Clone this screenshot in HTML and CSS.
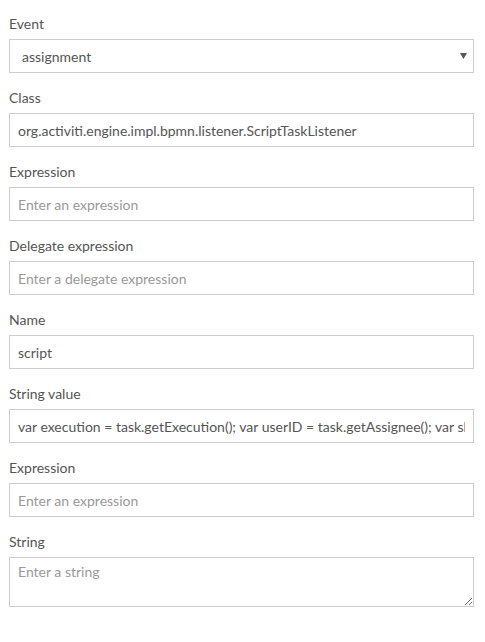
FILE: index.html
```html
<!DOCTYPE html>
<html>
<head>
<meta charset="utf-8">
<link rel="stylesheet" href="styles.css">
</head>
<body>
<form class="form">
  <div class="field">
    <label class="label">Event</label>
    <div class="select-wrap">
      <select class="control select">
        <option>assignment</option>
      </select>
      <svg class="caret" width="7" height="6" viewBox="0 0 7 6"><path d="M0 0H7L3.5 6Z" fill="#555"/></svg>
    </div>
  </div>
  <div class="field">
    <label class="label">Class</label>
    <input class="control" type="text" value="org.activiti.engine.impl.bpmn.listener.ScriptTaskListener">
  </div>
  <div class="field">
    <label class="label">Expression</label>
    <input class="control" type="text" placeholder="Enter an expression">
  </div>
  <div class="field">
    <label class="label">Delegate expression</label>
    <input class="control" type="text" placeholder="Enter a delegate expression">
  </div>
  <div class="field">
    <label class="label">Name</label>
    <input class="control" type="text" value="script">
  </div>
  <div class="field">
    <label class="label">String value</label>
    <input class="control" type="text" value="var execution = task.getExecution(); var userID = task.getAssignee(); var sla = execution.getVariable('sla');">
  </div>
  <div class="field">
    <label class="label">Expression</label>
    <input class="control" type="text" placeholder="Enter an expression">
  </div>
  <div class="field">
    <label class="label">String</label>
    <textarea class="control area" placeholder="Enter a string"></textarea>
  </div>
</form>
</body>
</html>
```
FILE: styles.css
```css
html, body {
  margin: 0;
  padding: 0;
  background: #fff;
}
body {
  font-family: Lato, "Open Sans", sans-serif;
  font-size: 14px;
  color: #555;
}
.form {
  display: flex;
  flex-direction: column;
  gap: 15px;
  padding: 14px 11px 0 9px;
  width: 465px;
}
.field {
  display: flex;
  flex-direction: column;
}
.label {
  display: block;
  font-size: 14px;
  line-height: 20px;
  color: #555;
  margin-bottom: 5px;
}
.control {
  box-sizing: border-box;
  width: 465px;
  height: 34px;
  margin: 0;
  padding: 0 8px;
  border: 1px solid #cccccc;
  border-radius: 0;
  background: #fff;
  font-family: Lato, "Open Sans", sans-serif;
  font-size: 14px;
  color: #555;
  outline: none;
}
.control::placeholder {
  color: #999;
  opacity: 1;
}
.select-wrap {
  position: relative;
}
.select {
  appearance: none;
  -webkit-appearance: none;
  padding-left: 12px;
}
.caret {
  position: absolute;
  right: 7px;
  top: 14px;
  pointer-events: none;
}
.area {
  height: 50px;
  padding: 4px 8px;
  line-height: 20px;
  resize: vertical;
}
```
